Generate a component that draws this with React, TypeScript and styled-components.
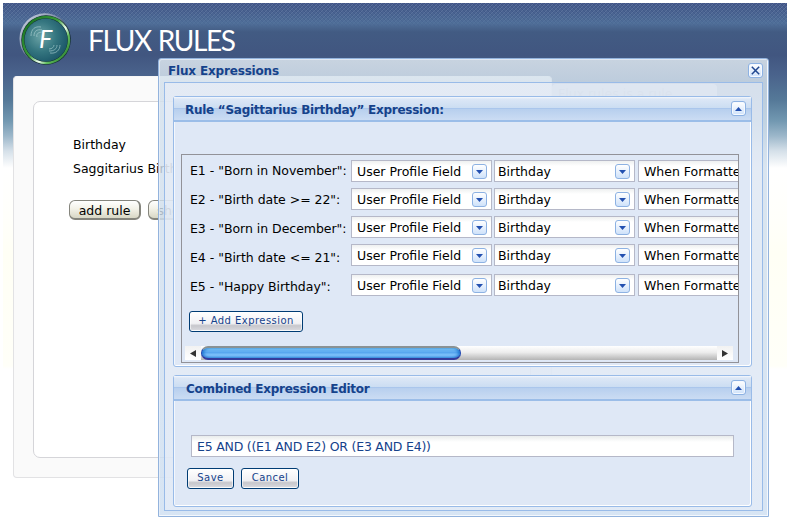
import React from "react";
import styled, { createGlobalStyle, css } from "styled-components";

const Global = createGlobalStyle`
  * { box-sizing: border-box; }
  body { margin: 0; background: #fff; overflow: hidden; font-family: "DejaVu Sans", sans-serif; }
`;

const Page = styled.div`
  position: relative;
  width: 787px;
  height: 527px;
  padding: 3px 0 0 3px;
  overflow: hidden;
  font-size: 12.5px;
  line-height: 16px;
  color: #000;
`;
const Backdrop = styled.div`
  position: relative;
  height: 524px;
  background: linear-gradient(
    #46598a 0, #506f99 20px, #425b83 29px, #415680 52px, #4a638c 72px, #557998 97px,
    #7298b1 118px, #9cb7ca 133px, #d5e0e9 148px, #fff 165px, #fffffa 220px, #fffff5 250px,
    #fffff8 363px, #fff 366px
  );
`;
const Hatch = styled.div`
  position: absolute;
  inset: 0 0 auto 0;
  height: 24px;
  background:
    repeating-linear-gradient(45deg, #1c376844 0 1px, transparent 1px 2.83px),
    repeating-linear-gradient(-45deg, #a9bfd838 0 1px, transparent 1px 2.83px);
  mask-image: linear-gradient(#000, #0008 16px, transparent);
`;
const Header = styled.header`
  position: relative;
  display: flex;
  height: 73px;
  padding: 9px 0 0 15px;
  gap: 14px;
`;
const Brand = styled.h1`
  margin: 10px 0 0;
  font: 400 28px/36px Lato, sans-serif;
  letter-spacing: -1.35px;
  word-spacing: 1px;
  white-space: pre;
  color: #fff;
`;
const Columns = styled.div`
  position: relative;
  display: flex;
  align-items: flex-start;
  padding-left: 10px;
`;
const Card = styled.main`
  width: 539px;
  height: 402px;
  padding: 24px 20px 19px 19px;
  background: #fafafa;
  border: 1px solid #e2e2e4;
  border-top-color: #f6f6f6;
  border-radius: 4px;
`;
const CardBody = styled.section`
  height: 357px;
  padding: 35px 0 0 39px;
  background: #fff;
  border: 1px solid #d5d5d9;
  border-radius: 7px;
`;
const SideTab = styled.aside`
  width: 165px;
  height: 390px;
  margin-top: 8px;
  padding: 2px 6px;
  border-radius: 4px 4px 0 0;
  background: linear-gradient(#fff9, #fff6 40px, #fff0 80px);
  color: #8994a8;
  white-space: nowrap;
`;
const RuleName = styled.div`
  height: 24px;
  white-space: nowrap;
`;
const Actions = styled.div`
  display: flex;
  gap: 7px;
  margin: 15px 0 0 -4px;
`;
const PillButton = styled.button<{ $width: number }>`
  width: ${(p) => p.$width}px;
  height: 20px;
  padding: 1px 0 0;
  border: 1px solid #85857d;
  border-width: 1px 2px 2px 1px;
  border-radius: 6px;
  background: linear-gradient(#fff, #f3f2e8 45%, #d8d7c5);
  font: 12.5px/17px "DejaVu Sans", sans-serif;
  color: #000;
`;

const Window = styled.div`
  position: absolute;
  left: 158px;
  top: 58px;
  width: 611px;
  height: 459px;
  padding: 0 5px 5px;
  border: 1px solid #93b3dd;
  border-radius: 3px 3px 0 0;
  box-shadow: inset 1px 1px #eaf2fbaa, inset -1px -1px #f4f8fd;
  background: linear-gradient(#dde7efdc, #d3e0ecd4 24px, #cddef1cc);
`;
const TitleBar = styled.div`
  display: flex;
  justify-content: space-between;
  height: 23px;
  padding: 4px 0 0 4px;
`;
const Heading = styled.h2<{ $spacing?: number }>`
  margin: 0;
  font: 700 12px/17px "DejaVu Sans", sans-serif;
  letter-spacing: ${(p) => p.$spacing ?? 0}px;
  color: #15428b;
  white-space: nowrap;
`;
const WindowBody = styled.div`
  display: flex;
  flex-direction: column;
  gap: 8px;
  height: 429px;
  padding: 13px 10px 3px 8px;
  border: 1px solid #99bbe8;
  background: #edf0fa88;
`;
const Panel = styled.section<{ $height: number }>`
  flex: none;
  height: ${(p) => p.$height}px;
  border: 1px solid #99bbe8;
  border-radius: 3px;
  box-shadow: inset -1px -1px #fff, inset 1px 0 #f3f7fd;
  background: #dfe8f6;
`;
const PanelHeader = styled.div<{ $indent: number }>`
  display: flex;
  justify-content: space-between;
  height: 25px;
  padding: 4px 5px 0 ${(p) => p.$indent}px;
  border-bottom: 2px solid #9bbde8;
  background: linear-gradient(#f5f8fd 0, #dce7f6 2px, #cbddf2 11px, #9dbdea 11px, #b7cfee 12px, #cbdcf3);
`;
const PanelTitle = styled(Heading)`
  padding-top: 1px;
`;
const toolBox = css`
  display: flex;
  flex: none;
  align-items: center;
  justify-content: center;
  width: 15px;
  height: 15px;
  padding: 0;
  border: 1px solid #8db2e3;
  border-radius: 3px;
  background: linear-gradient(#fff, #cfe2fa);
`;
const Tool = styled.button`
  ${toolBox}
  box-shadow: inset 0 0 0 1px #f5f9ff;
`;
const ScrollBox = styled.div`
  display: flex;
  flex-direction: column;
  width: 558px;
  height: 209px;
  margin: 32px 0 0 7px;
  border: 1px solid #929298;
  overflow: hidden;
`;
const Expression = styled.div<{ $gap: number }>`
  display: flex;
  flex: none;
  align-items: center;
  height: 22px;
  margin-top: ${(p) => p.$gap}px;
  padding-left: 8px;
`;
const ExpressionLabel = styled.span<{ $drop: number }>`
  flex: none;
  width: 161px;
  padding-top: ${(p) => p.$drop}px;
  letter-spacing: -0.03px;
  white-space: nowrap;
`;
const Select = styled.div<{ $inset: number; $after?: number }>`
  display: flex;
  flex: none;
  justify-content: space-between;
  width: 141px;
  height: 22px;
  margin-right: ${(p) => p.$after ?? 2}px;
  padding: 3px 4px 0 ${(p) => p.$inset}px;
  border: 1px solid #b5b8c8;
  background: linear-gradient(#eef0f0, #fff 5px);
  white-space: nowrap;
`;
const SmallButton = styled.button<{ $width: number }>`
  flex: none;
  width: ${(p) => p.$width}px;
  height: 21px;
  padding: 0 0 2px;
  border: 1px solid #003c74;
  border-radius: 3px;
  background: linear-gradient(#fff 0, #f1f1f4 60%, #c7c7cc 72%, #d5d5da 92%, #fff);
  box-shadow: inset 0 0 0 1px #fff9;
  font: 10px/17px "DejaVu Sans", sans-serif;
  letter-spacing: 0.45px;
  color: #15428b;
  white-space: nowrap;
`;
const AddRow = styled.div`
  padding: 15px 0 0 7px;
`;
const Scrollbar = styled.div`
  display: flex;
  width: 548px;
  height: 14px;
  margin: 14px 0 0 3px;
  background: linear-gradient(#fff, #ededed 45%, #b4b4b4);
`;
const ScrollArrow = styled.div`
  display: flex;
  align-items: center;
  justify-content: center;
  width: 16px;
  background: linear-gradient(#f2f2f2, #fff);
`;
const Track = styled.div`
  flex: 1;
`;
const Thumb = styled.div`
  width: 260px;
  height: 14px;
  border: 1px solid #1942b0;
  border-top: 2px solid #8a9294;
  border-bottom: 2px solid #343b9c;
  border-radius: 7px;
  background: linear-gradient(#a9e5fb, #6ab6f4 25%, #58a6ef 45%, #7fc3fb 70%, #6cb1f2);
  box-shadow: inset 2px 0 3px #0866c8aa, inset -2px 0 3px #0866c8aa;
`;
const EditorField = styled.div`
  width: 543px;
  height: 22px;
  margin: 34px 0 11px 17px;
  padding: 3px 5px;
  border: 1px solid #b5b8c8;
  background: linear-gradient(#e9ecec, #fff 6px);
  color: #15428b;
  letter-spacing: -0.22px;
`;
const EditorActions = styled.div`
  display: flex;
  gap: 7px;
  padding-left: 13px;
`;

const Logo = () => (
  <svg width="56" height="56" viewBox="0 0 56 56">
    <defs>
      <radialGradient id="orb" cx=".38" cy=".42" r=".65">
        <stop offset="0" stopColor="#6ba3a6" />
        <stop offset=".55" stopColor="#34757f" />
        <stop offset="1" stopColor="#1b5668" />
      </radialGradient>
      <linearGradient id="rim" x1="0" y1="0" x2="1" y2="1">
        <stop offset="0" stopColor="#d9dfec" />
        <stop offset=".4" stopColor="#8290aa" />
        <stop offset=".7" stopColor="#142936" />
      </linearGradient>
      <linearGradient id="band" x1="0" y1="0" x2="1" y2=".8">
        <stop offset="0" stopColor="#116a1c" />
        <stop offset=".5" stopColor="#3c9d3c" />
        <stop offset=".68" stopColor="#effff0" />
        <stop offset=".8" stopColor="#62bd5e" />
        <stop offset="1" stopColor="#2b8130" />
      </linearGradient>
    </defs>
    <circle cx="27" cy="26.8" r="25.5" fill="url(#rim)" />
    <circle cx="28" cy="28" r="24.7" fill="#102b2e" />
    <circle cx="28" cy="28" r="23" fill="none" stroke="url(#band)" strokeWidth="2.4" />
    <circle cx="28" cy="28" r="21.5" fill="url(#orb)" />
    <g fill="none" stroke="#b5d6d8" strokeWidth="1" opacity=".6">
      <path d="M13 24C13 17 17 14 23 15" />
      <path d="M16 24C16 19 19 17 24 18" />
      <path d="M19 25C18 22 20 20 25 20" />
      <path d="M42 33C42 38 38 42 32 41" />
      <path d="M39 33C39 37 36 39 31 39" />
      <path d="M36 33C36 35 34 37 31 37" />
    </g>
    <text x="21" y="35.5" fontFamily="Lato" fontStyle="italic" fontSize="25" fill="#fff">F</text>
  </svg>
);

const Arrow = ({ up }: { up?: boolean }) => (
  <svg width="7" height="4" viewBox="0 0 7 4">
    <path d={up ? "M0 4L3.5 0L7 4Z" : "M0 0H7L3.5 4Z"} fill="#2350b0" />
  </svg>
);
const Cross = () => (
  <svg width="9" height="9" viewBox="0 0 9 9">
    <path d="M.8 .8L8.2 8.2M8.2 .8L.8 8.2" stroke="#204790" strokeWidth="1.5" />
  </svg>
);
const SideArrow = ({ right }: { right?: boolean }) => (
  <svg width="6" height="7" viewBox="0 0 6 7">
    <path d={right ? "M0 0L6 3.5L0 7Z" : "M6 0L0 3.5L6 7Z"} fill="#333" />
  </svg>
);
const Tick = styled.span`
  ${toolBox}
`;

const expressions = [
  { label: 'E1 - "Born in November":', gap: 5, drop: 0 },
  { label: 'E2 - "Birth date >= 22":', gap: 6, drop: 2 },
  { label: 'E3 - "Born in December":', gap: 6, drop: 3 },
  { label: 'E4 - "Birth date <= 21":', gap: 6, drop: 5 },
  { label: 'E5 - "Happy Birthday":', gap: 8, drop: 3 },
];

export default function App() {
  return (
    <Page>
      <Global />
      <Backdrop>
        <Hatch />
        <Header>
          <Logo />
          <Brand>FLUX RULES</Brand>
        </Header>
        <Columns>
          <Card>
            <CardBody>
              <RuleName>Birthday</RuleName>
              <RuleName>Saggitarius Birthday</RuleName>
              <Actions>
                <PillButton $width={72}>add rule</PillButton>
                <PillButton $width={87}>show rules</PillButton>
              </Actions>
            </CardBody>
          </Card>
          <SideTab>Flux rules is a rule</SideTab>
        </Columns>
      </Backdrop>
      <Window>
        <TitleBar>
          <Heading $spacing={-0.17}>Flux Expressions</Heading>
          <Tool aria-label="Close"><Cross /></Tool>
        </TitleBar>
        <WindowBody>
          <Panel $height={271}>
            <PanelHeader $indent={11}>
              <PanelTitle $spacing={-0.27}>Rule “Sagittarius Birthday” Expression:</PanelTitle>
              <Tool aria-label="Collapse"><Arrow up /></Tool>
            </PanelHeader>
            <ScrollBox>
              {expressions.map((e) => (
                <Expression key={e.label} $gap={e.gap}>
                  <ExpressionLabel $drop={e.drop}>{e.label}</ExpressionLabel>
                  <Select $inset={5}>
                    <span>User Profile Field</span>
                    <Tick><Arrow /></Tick>
                  </Select>
                  <Select $inset={3} $after={3}>
                    <span>Birthday</span>
                    <Tick><Arrow /></Tick>
                  </Select>
                  <Select $inset={5}>
                    <span>When Formatted</span>
                  </Select>
                </Expression>
              ))}
              <AddRow>
                <SmallButton $width={114}>+ Add Expression</SmallButton>
              </AddRow>
              <Scrollbar>
                <ScrollArrow><SideArrow /></ScrollArrow>
                <Track><Thumb /></Track>
                <ScrollArrow><SideArrow right /></ScrollArrow>
              </Scrollbar>
            </ScrollBox>
          </Panel>
          <Panel $height={132}>
            <PanelHeader $indent={12}>
              <PanelTitle $spacing={-0.27}>Combined Expression Editor</PanelTitle>
              <Tool aria-label="Collapse"><Arrow up /></Tool>
            </PanelHeader>
            <EditorField>E5 AND ((E1 AND E2) OR (E3 AND E4))</EditorField>
            <EditorActions>
              <SmallButton $width={47}>Save</SmallButton>
              <SmallButton $width={58}>Cancel</SmallButton>
            </EditorActions>
          </Panel>
        </WindowBody>
      </Window>
    </Page>
  );
}
